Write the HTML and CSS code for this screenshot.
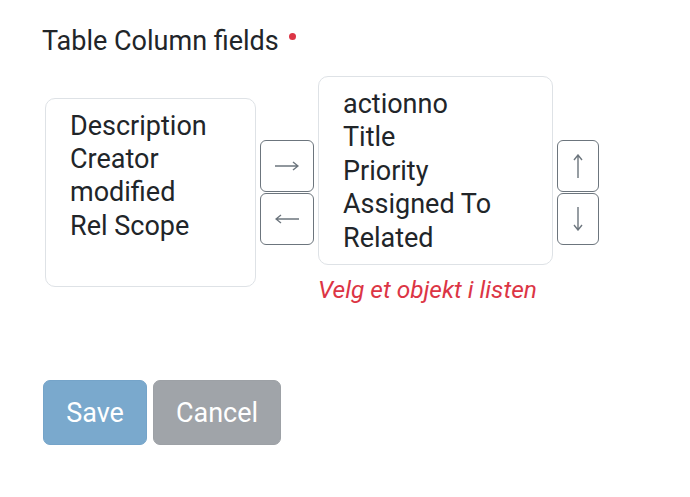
FILE: index.html
```html
<!DOCTYPE html>
<html lang="no">
<head>
    <meta charset="UTF-8">
    <meta name="viewport" content="width=device-width, initial-scale=1.0">
    <title>Table Column fields</title>
    <link rel="stylesheet" href="styles.css">
</head>
<body>
    <div class="page">
        <label class="field-label">Table Column fields <span class="required"></span></label>
        <div class="picker">
            <div class="list">
                <div class="item">Description</div>
                <div class="item">Creator</div>
                <div class="item">modified</div>
                <div class="item">Rel Scope</div>
            </div>
            <div class="btn-stack">
                <button class="arrow-btn wide">
                    <svg width="24" height="12" viewBox="0 0 24 12"><path d="M0 6H23M18 2L23 6L18 10" fill="none" stroke="#6c757d" stroke-width="1.4"/></svg>
                </button>
                <button class="arrow-btn wide">
                    <svg width="24" height="12" viewBox="0 0 24 12"><path d="M24 6H1M6 2L1 6L6 10" fill="none" stroke="#6c757d" stroke-width="1.4"/></svg>
                </button>
            </div>
            <div class="selected-col">
                <div class="list selected">
                    <div class="item">actionno</div>
                    <div class="item">Title</div>
                    <div class="item">Priority</div>
                    <div class="item">Assigned To</div>
                    <div class="item">Related</div>
                </div>
                <div class="error">Velg et objekt i listen</div>
            </div>
            <div class="btn-stack">
                <button class="arrow-btn narrow">
                    <svg width="12" height="24" viewBox="0 0 12 24"><path d="M6 24V1M2 6L6 1L10 6" fill="none" stroke="#6c757d" stroke-width="1.4"/></svg>
                </button>
                <button class="arrow-btn narrow">
                    <svg width="12" height="24" viewBox="0 0 12 24"><path d="M6 0V23M2 18L6 23L10 18" fill="none" stroke="#6c757d" stroke-width="1.4"/></svg>
                </button>
            </div>
        </div>
        <div class="actions">
            <button class="btn btn-save">Save</button>
            <button class="btn btn-cancel">Cancel</button>
        </div>
    </div>
</body>
</html>
```

FILE: styles.css
```css
body {
	margin: 0;
	background: #fff;
	font-family: Roboto, "Liberation Sans", sans-serif;
	color: #212529;
}

.page {
	padding: 24px 0 0 42px;
}

.field-label {
	display: block;
	font-size: 27px;
	line-height: 34px;
}

.required {
	display: inline-block;
	width: 7px;
	height: 7px;
	border-radius: 50%;
	background: #dc3545;
	vertical-align: 10px;
	margin-left: 4px;
}

.picker {
	display: flex;
	align-items: center;
	gap: 4px;
	margin-top: 18px;
	margin-left: 3px;
}

.list {
	box-sizing: border-box;
	height: 189px;
	border: 1px solid #dee2e6;
	border-radius: 10px;
	padding: 11px 10px 0 24px;
	font-size: 27px;
	line-height: 33.4px;
	white-space: nowrap;
}

.picker > .list {
	width: 211px;
}

.list.selected {
	width: 235px;
}

.selected-col {
	display: flex;
	flex-direction: column;
}

.error {
	color: #dc3545;
	font-style: italic;
	font-size: 24.5px;
	line-height: 28px;
	margin-top: 11px;
	margin-bottom: 4px;
}

.btn-stack {
	display: flex;
	flex-direction: column;
	gap: 1px;
}

.arrow-btn {
	box-sizing: border-box;
	display: flex;
	align-items: center;
	justify-content: center;
	height: 52px;
	background: #fff;
	border: 1px solid #6c757d;
	border-radius: 6px;
	padding: 0;
}

.arrow-btn.wide {
	width: 54px;
}

.arrow-btn.narrow {
	width: 42px;
}

.actions {
	display: flex;
	gap: 6px;
	margin-top: 72px;
	margin-left: 1px;
}

.btn {
	height: 65px;
	border: 1px solid transparent;
	border-radius: 7px;
	color: #fff;
	font-family: Roboto, "Liberation Sans", sans-serif;
	font-size: 27px;
	padding: 0;
}

.btn-save {
	width: 104px;
	background: #7aa9cd;
	border-color: #75a4c9;
}

.btn-cancel {
	width: 128px;
	background: #a0a4a9;
	border-color: #9da1a6;
}
```
